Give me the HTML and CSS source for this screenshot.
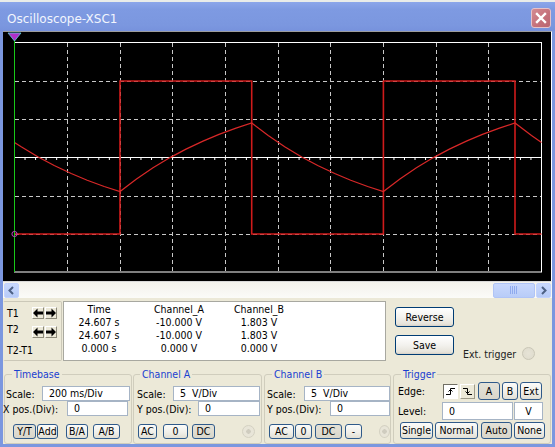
FILE: index.html
```html
<!DOCTYPE html>
<html>
<head>
<meta charset="utf-8">
<title>Oscilloscope-XSC1</title>
<link rel="stylesheet" href="styles.css">
</head>
<body>
<div class="window">
  <div class="titlebar">
    <span class="title">Oscilloscope-XSC1</span>
    <span class="close"><svg viewBox="0 0 20 20" width="20" height="20"><path d="M6 6 L14 14 M14 6 L6 14" stroke="#fff" stroke-width="2.4" stroke-linecap="square"/></svg></span>
  </div>
  <div class="body">
    <div class="screen">
      <svg class="scope" viewBox="3 32 548 249" width="548" height="249">
        <g stroke="#c8c8c8" stroke-width="1" stroke-dasharray="4 3" fill="none">
          <path d="M67.5 43V272M120.5 43V272M172.5 43V272M225.5 43V272M278.5 43V272M330.5 43V272M383.5 43V272M436.5 43V272M488.5 43V272"/>
          <path d="M15 81.5H541M15 119.5H541M15 196.5H541M15 234.5H541"/>
        </g>
        <path d="M14.5 157.5H541.5" stroke="#fff" stroke-width="1"/>
        <path d="M14 158.5H542" stroke="#fff" stroke-width="3" stroke-dasharray="1 9.54"/>
        <rect x="14.5" y="42.5" width="527" height="229.5" fill="none" stroke="#fff" stroke-width="1"/>
        <polyline fill="none" stroke="#cf1b1b" stroke-width="1.6" points="14.5,234 120,234 120,81 251.7,81 251.7,234 383.4,234 383.4,81 515,81 515,234 541.5,234"/>
        <polyline fill="none" stroke="#d82828" stroke-width="1.2" points="14.5,142.4 21.2,146.8 38.2,157 54.2,165.5 71.2,173.5 87.2,180.2 104.2,186.5 120,191.6 136.5,179 153,167.8 170,157.6 186,149.1 203,141.1 219,134.4 236,128.1 251.7,123 268.2,135.6 284.7,146.8 301.7,157 317.7,165.5 334.7,173.5 350.7,180.2 367.7,186.5 383.4,191.6 399.9,179 416.4,167.8 433.4,157.6 449.4,149.1 466.4,141.1 482.4,134.4 499.4,128.1 515,123 531.5,135.6 541.5,142.5"/>
        <path d="M14.5 36V272" stroke="#18c818" stroke-width="1"/>
        <polygon points="8,33 21,33 14.5,41" fill="#b030c8" stroke="#60d0e0" stroke-width="0.8"/>
        <circle cx="14.5" cy="234" r="2.6" fill="none" stroke="#c040c0" stroke-width="1"/>
      </svg>
    </div>
    <div class="hscroll">
      <span class="sbtn"><svg viewBox="0 0 15 15" width="15" height="15"><path d="M9 4 L5.5 7.5 L9 11" fill="none" stroke="#4d6185" stroke-width="2"/></svg></span>
      <span class="track"></span>
      <span class="thumb"><svg viewBox="0 0 10 8" width="10" height="8"><path d="M1.5 0V8M3.5 0V8M5.5 0V8M7.5 0V8" stroke="#8faaee" stroke-width="1"/></svg></span>
      <span class="sbtn"><svg viewBox="0 0 15 15" width="15" height="15"><path d="M6 4 L9.5 7.5 L6 11" fill="none" stroke="#4d6185" stroke-width="2"/></svg></span>
    </div>
    <div class="readout">
      <div class="tpanel">
        <div class="trow">
          <span class="tlabel">T1</span>
          <span class="abtn"><svg viewBox="0 0 10 10" width="10" height="10"><path d="M0 5 L4.5 0.5 V3.5 H10 V6.5 H4.5 V9.5 Z" fill="#000"/></svg></span>
          <span class="abtn"><svg viewBox="0 0 10 10" width="10" height="10"><path d="M10 5 L5.5 0.5 V3.5 H0 V6.5 H5.5 V9.5 Z" fill="#000"/></svg></span>
        </div>
        <div class="trow">
          <span class="tlabel t2l">T2</span>
          <span class="abtn"><svg viewBox="0 0 10 10" width="10" height="10"><path d="M0 5 L4.5 0.5 V3.5 H10 V6.5 H4.5 V9.5 Z" fill="#000"/></svg></span>
          <span class="abtn"><svg viewBox="0 0 10 10" width="10" height="10"><path d="M10 5 L5.5 0.5 V3.5 H0 V6.5 H5.5 V9.5 Z" fill="#000"/></svg></span>
        </div>
        <div class="tdiff">T2-T1</div>
      </div>
      <div class="table">
        <span>Time</span><span>Channel_A</span><span>Channel_B</span>
        <span>24.607 s</span><span>-10.000 V</span><span>1.803 V</span>
        <span>24.607 s</span><span>-10.000 V</span><span>1.803 V</span>
        <span>0.000 s</span><span>0.000 V</span><span>0.000 V</span>
      </div>
      <div class="actions">
        <button class="xpbtn">Reverse</button>
        <button class="xpbtn">Save</button>
      </div>
      <div class="ext"><span>Ext. trigger</span><span class="radio"></span></div>
    </div>
    <div class="controls">
      <fieldset class="group g-time">
        <legend>Timebase</legend>
        <div class="row r1"><span class="lbl l-scale">Scale:</span><span class="field f-tscale">200 ms/Div</span></div>
        <div class="row r2"><span class="lbl l-xpos">X pos.(Div):</span><span class="field f-xpos">0</span></div>
        <div class="btns b-time">
          <button class="sbtn2 on w-yt">Y/T</button>
          <button class="sbtn2 w-add">Add</button>
          <button class="sbtn2 w-ba">B/A</button>
          <button class="sbtn2 w-ab">A/B</button>
        </div>
      </fieldset>
      <fieldset class="group g-cha">
        <legend>Channel A</legend>
        <div class="row r1"><span class="lbl l-scale">Scale:</span><span class="field f-ascale">5&nbsp; V/Div</span></div>
        <div class="row r2"><span class="lbl l-ypos">Y pos.(Div):</span><span class="field f-aypos">0</span></div>
        <div class="btns b-cha">
          <button class="sbtn2 w-ac">AC</button>
          <button class="sbtn2 w-zero">0</button>
          <button class="sbtn2 on w-dc">DC</button>
          <span class="radio dim"></span>
        </div>
      </fieldset>
      <fieldset class="group g-chb">
        <legend>Channel B</legend>
        <div class="row r1"><span class="lbl l-scale">Scale:</span><span class="field f-bscale">5&nbsp; V/Div</span></div>
        <div class="row r2"><span class="lbl l-ypos">Y pos.(Div):</span><span class="field f-bypos">0</span></div>
        <div class="btns b-chb">
          <button class="sbtn2 w-acb">AC</button>
          <button class="sbtn2 w-zerob">0</button>
          <button class="sbtn2 on w-dcb">DC</button>
          <button class="sbtn2 w-minus">-</button>
          <span class="radio dim"></span>
        </div>
      </fieldset>
      <fieldset class="group g-trig">
        <legend>Trigger</legend>
        <div class="row t1">
          <span class="lbl l-edge">Edge:</span>
          <span class="edge on"><svg viewBox="0 0 13 13" width="13" height="13"><path d="M2 9.5H6.5V3.5H11M4.5 6.5L6.5 4.5L8.5 6.5" fill="none" stroke="#000" stroke-width="1"/></svg></span>
          <span class="edge"><svg viewBox="0 0 13 13" width="13" height="13"><path d="M2 3.5H6.5V9.5H11M4.5 6.5L6.5 8.5L8.5 6.5" fill="none" stroke="#000" stroke-width="1"/></svg></span>
          <button class="sbtn2 on w-ta">A</button>
          <button class="sbtn2 w-tb">B</button>
          <button class="sbtn2 w-ext">Ext</button>
        </div>
        <div class="row t2"><span class="lbl l-level">Level:</span><span class="field f-level">0</span><span class="field f-unit">V</span></div>
        <div class="btns b-trig">
          <button class="sbtn2 w-single">Single</button>
          <button class="sbtn2 w-normal">Normal</button>
          <button class="sbtn2 on w-auto">Auto</button>
          <button class="sbtn2 w-none">None</button>
        </div>
      </fieldset>
    </div>
  </div>
</div>
</body>
</html>
```

FILE: styles.css
```css
* { box-sizing: border-box; }
html, body { margin: 0; padding: 0; }
body {
  width: 555px;
  height: 447px;
  overflow: hidden;
  font-family: "DejaVu Sans Condensed", "DejaVu Sans", sans-serif;
  font-size: 10.5px;
  color: #000;
  background: #7b97df;
}
button { font: inherit; color: inherit; margin: 0; padding: 0; cursor: default; }

.window {
  width: 555px;
  height: 447px;
  display: flex;
  flex-direction: column;
  background: #7b97df;
}

/* title bar */
.titlebar {
  height: 31px;
  flex: none;
  display: flex;
  align-items: center;
  padding: 0 4px 0 7px;
  border-top: 2px solid #e9ece9;
  background: linear-gradient(#8ba6ea, #7e9ae2 25%, #7b97df 80%, #7792dc);
}
.title {
  flex: 1;
  color: #f2f5fd;
  font-family: "DejaVu Sans", sans-serif;
  font-size: 12px;
  padding-top: 5px;
}
.close {
  width: 20px;
  height: 20px;
  margin-top: 3px;
  display: block;
  border: 1px solid #e6c2c8;
  border-radius: 3px;
  background: linear-gradient(135deg, #d48b92, #c4707a 60%, #b96570);
  overflow: hidden;
}
.close svg { display: block; margin: -1px; }

/* body */
.body {
  flex: 1;
  margin: 0 3px 3px;
  background: #ece9d8;
  display: flex;
  flex-direction: column;
}
.screen {
  height: 251px;
  flex: none;
  background: #000;
  border-top: 1px solid #9d9d9d;
  border-right: 1px solid #fff;
  border-bottom: 1px solid #d9d9d9;
}
.scope { display: block; }

/* scrollbar */
.hscroll {
  height: 16px;
  flex: none;
  display: flex;
  align-items: center;
  padding: 0 1px;
  background: linear-gradient(#f3f2ec, #fbfbf8);
}
.sbtn {
  width: 15px;
  height: 15px;
  border-radius: 2px;
  border: 1px solid #c3d3fd;
  background: linear-gradient(#c8d8fd, #b7cbf7);
  display: flex;
  align-items: center;
  justify-content: center;
}
.sbtn svg { display: block; margin: -1px; }
.track { flex: 1; }
.thumb {
  width: 42px;
  height: 15px;
  margin-right: 1px;
  border-radius: 2px;
  border: 1px solid #b0c4f6;
  background: linear-gradient(#c9d8fd, #b8ccf8);
  display: flex;
  align-items: center;
  justify-content: center;
}

/* readout row */
.readout {
  height: 66px;
  flex: none;
  display: flex;
  padding-top: 3px;
}
.tpanel {
  width: 59px;
  height: 60px;
  border: 1px solid #cbc8b8;
  border-left-color: #ece9d8;
  border-radius: 2px;
  padding: 5px 0 0 3px;
}
.trow {
  display: flex;
  align-items: center;
  height: 12px;
  margin-bottom: 7px;
}
.tlabel { width: 25px; }
.t2l { align-self: flex-start; margin-top: -3px; line-height: 12px; }
.abtn {
  width: 12px;
  height: 12px;
  margin-right: 1px;
  background: #ece9d8;
  border: 1px solid;
  border-color: #fff #8d8a7a #8d8a7a #fff;
  display: flex;
  align-items: center;
  justify-content: center;
}
.abtn svg { display: block; }
.tdiff { line-height: 12px; margin-top: -1px; }

.table {
  width: 323px;
  height: 60px;
  margin-left: 1px;
  background: #fff;
  border: 1px solid #a8a8a0;
  display: grid;
  grid-template-columns: 70px 90px 70px;
  grid-auto-rows: 13px;
  line-height: 13px;
  padding-top: 1px;
  text-align: center;
}

.actions {
  margin-left: 9px;
  padding-top: 6px;
  display: flex;
  flex-direction: column;
  gap: 8px;
}
.xpbtn {
  width: 59px;
  height: 20px;
  border: 1px solid #003c74;
  border-radius: 3px;
  background: linear-gradient(#ffffff, #f3f2ee 50%, #e6e3da 90%, #d6d0c5);
  text-align: center;
}
.ext {
  margin-left: 9px;
  align-self: flex-end;
  margin-bottom: 4px;
  display: flex;
  align-items: center;
  gap: 6px;
  color: #222;
}
.radio {
  width: 13px;
  height: 13px;
  border-radius: 50%;
  border: 1px solid #c9c6b6;
  background: radial-gradient(circle at 50% 50%, #e6e3d6, #dedbcc);
  display: block;
}
.radio.dim { border-color: #d4d1c2; background: radial-gradient(circle, #cfccbf 0 2px, #e8e5d8 2.5px); }

/* control groups */
.controls {
  flex: 1;
  display: flex;
  padding-left: 1px;
  padding-top: 4px;
}
.group {
  margin: 0;
  padding: 0;
  border: 1px solid #d0cdbd;
  border-radius: 3px;
  min-width: 0;
}
.group legend {
  color: #1a3fd0;
  line-height: 13px;
  padding: 0 2px;
}
.g-time { width: 128px; margin-right: 1px; }
.g-time legend { margin-left: 7px; }
.g-cha { width: 129px; margin-right: 2px; }
.g-cha legend { margin-left: 6px; }
.g-chb { width: 127px; margin-right: 2px; }
.g-chb legend { margin-left: 7px; }
.g-trig { width: 158px; }
.g-trig legend { margin-left: 7px; }

.row { display: flex; align-items: center; }
.r1 { margin-top: 5px; }
.r2 { margin-top: 0; }
.lbl { white-space: nowrap; flex: none; }
.field {
  height: 15px;
  line-height: 13px;
  background: #fff;
  border: 1px solid #a6b4c5;
  padding-left: 6px;
  white-space: nowrap;
  flex: none;
}

.g-time .l-scale { margin-left: 1px; width: 36px; }
.g-time .l-xpos { margin-left: -2px; width: 64px; }
.f-tscale { width: 88px; }
.f-xpos { width: 61px; }

.g-cha .l-scale { margin-left: 3px; width: 36px; }
.g-cha .l-ypos { margin-left: 3px; width: 61px; }
.f-ascale { width: 87px; }
.f-aypos { width: 62px; }

.g-chb .l-scale { margin-left: 2px; width: 37px; }
.g-chb .l-ypos { margin-left: 2px; width: 63px; }
.f-bscale { width: 86px; }
.f-bypos { width: 60px; }

.btns { display: flex; align-items: center; margin-top: 8px; }
.sbtn2 {
  height: 15px;
  line-height: 13px;
  border: 1px solid #2f5a8a;
  border-radius: 3px;
  background: linear-gradient(#fbfbf9, #efeee8 60%, #e2dfd4);
  text-align: center;
  flex: none;
}
.sbtn2.on { background: linear-gradient(#e4e2d8, #d9d6ca); }

.b-time { padding-left: 8px; }
.w-yt { width: 23px; }
.w-add { width: 21px; margin-left: 1px; }
.w-ba { width: 22px; margin-left: 8px; }
.w-ab { width: 27px; margin-left: 5px; }

.b-cha { padding-left: 4px; }
.w-ac { width: 19px; }
.w-zero { width: 25px; margin-left: 6px; }
.w-dc { width: 23px; margin-left: 4px; }
.b-cha .radio { margin-left: 27px; }

.b-chb { padding-left: 4px; }
.w-acb { width: 25px; }
.w-zerob { width: 17px; margin-left: 1px; }
.w-dcb { width: 27px; margin-left: 3px; }
.w-minus { width: 17px; margin-left: 3px; }
.b-chb .radio { margin-left: 17px; }

.t1 { margin-top: 1px; }
.l-edge { margin-left: 4px; width: 45px; }
.edge {
  width: 15px;
  height: 15px;
  border: 1px solid;
  border-color: #fff #9d9a8a #9d9a8a #fff;
  background: #ece9d8;
  display: flex;
  align-items: center;
  justify-content: center;
  margin-right: 2px;
}
.edge.on { border-color: #716f64 #fff #fff #716f64; background: #fff; }
.edge svg { display: block; }
.w-ta { width: 22px; height: 18px; margin-left: 1px; }
.w-tb { width: 16px; height: 18px; margin-left: 2px; }
.w-ext { width: 22px; height: 18px; margin-left: 2px; }

.t2 { margin-top: 2px; }
.l-level { margin-left: 4px; width: 44px; }
.f-level { width: 71px; height: 18px; line-height: 16px; }
.f-unit { width: 29px; height: 18px; line-height: 16px; padding-left: 0; text-align: center; margin-left: 1px; }

.b-trig { padding-left: 6px; margin-top: 2px; }
.b-trig .sbtn2 { height: 17px; line-height: 15px; }
.w-single { width: 33px; }
.w-normal { width: 43px; margin-left: 2px; }
.w-auto { width: 31px; margin-left: 3px; }
.w-none { width: 31px; margin-left: 2px; }
```
